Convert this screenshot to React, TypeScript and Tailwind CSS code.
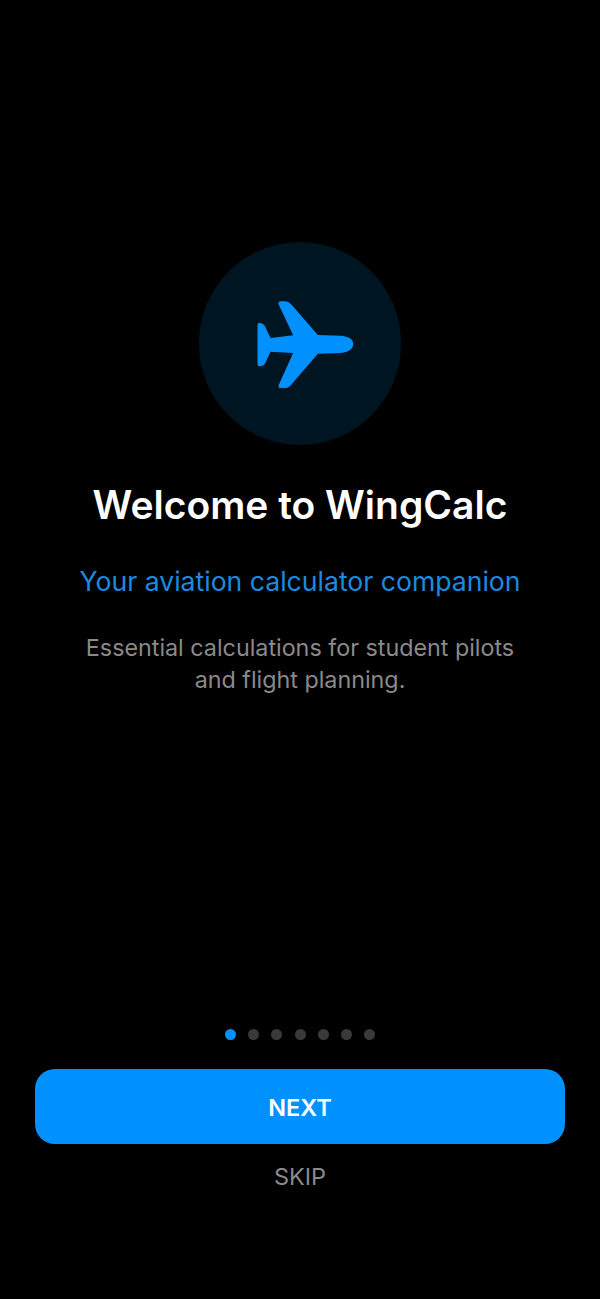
import React from "react";

const DOTS = [0, 1, 2, 3, 4, 5, 6];

function PlaneIcon() {
  return (
    <svg width="107" height="90" viewBox="170 190 320 270" fill="#0091ff">
      <path d="M265 207 Q261 197 272 197 L285 197 Q295 198 302 206 L382 298 L450 300 Q488 303 488 325 Q488 348 450 352 L382 354 L302 447 Q294 457 282 457 L271 457 Q261 457 265 447 L308 352 L240 348 L224 383 Q219 392 208 392 Q201 392 201 384 L201 268 Q201 261 209 262 Q218 262 223 271 L240 307 L308 299 Z" />
    </svg>
  );
}

export default function App() {
  return (
    <div className="flex h-[1299px] w-[600px] flex-col items-center overflow-hidden bg-black pt-[242px] font-['Inter',sans-serif]">
      <div className="flex h-[203px] w-[202px] items-center justify-center rounded-full bg-[#001522]">
        <PlaneIcon />
      </div>

      <h1 className="mt-[35px] text-center text-[39px] leading-[50px] font-semibold text-white">Welcome to WingCalc</h1>
      <p className="mt-[34px] text-center text-[26.6px] leading-[34px] text-[#1a8be0]">Your aviation calculator companion</p>
      <p className="mt-[34px] text-center text-[23.3px] leading-[32px] text-[#8a8a8a]">
        Essential calculations for student pilots
        <br />
        and flight planning.
      </p>

      <div className="mt-auto flex items-center gap-[12.25px]">
        {DOTS.map((d) => (
          <div key={d} className={d === 0 ? "h-[11px] w-[11px] rounded-full bg-[#0091ff]" : "h-[11px] w-[11px] rounded-full bg-[#3a3a3a]"} />
        ))}
      </div>

      <button className="mt-[29px] flex h-[75px] w-[530px] items-center justify-center rounded-[20px] bg-[#0091ff] pt-[2px] text-[23.5px] font-semibold text-white">
        NEXT
      </button>
      <button className="mt-[16px] mb-[105px] text-[23.5px] leading-[34px] text-[#8a8a8a]">SKIP</button>
    </div>
  );
}
